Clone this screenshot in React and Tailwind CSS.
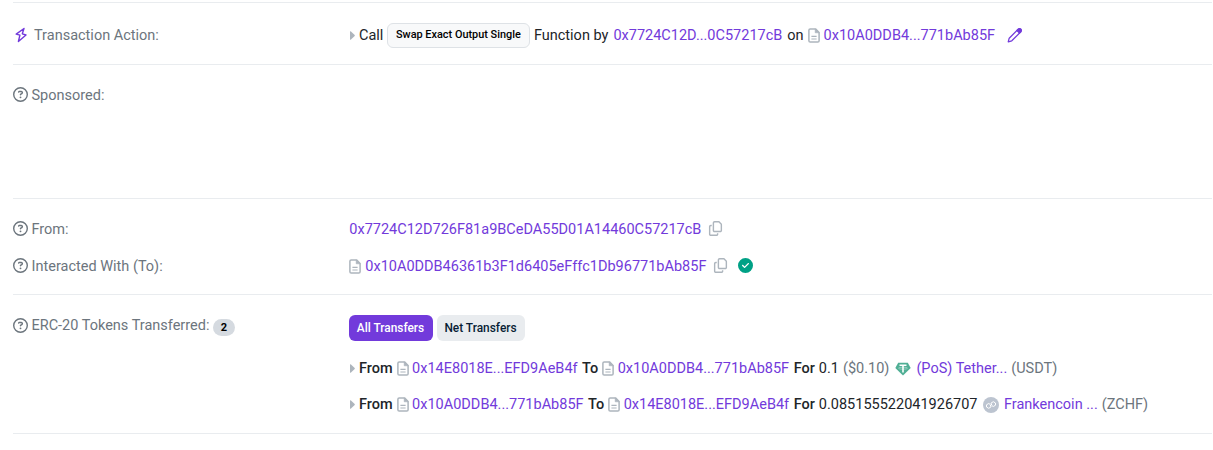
import React from "react";
import { FaRegCopy, FaRegCircleQuestion, FaCircleCheck } from "react-icons/fa6";

const Section = ({ className, children }) => (
  <section className={`border-b border-[#e9ecef] ${className}`}>{children}</section>
);

const Row = ({ className = "h-[37px]", label, children }) => (
  <div className={`flex items-center ${className}`}>
    <div className="flex w-[336px] shrink-0 items-center text-[#6c757d]">{label}</div>
    <div className="flex items-center">{children}</div>
  </div>
);

const HelpLabel = ({ children }) => (
  <>
    <FaRegCircleQuestion className="mb-[2px] mr-[3.5px] h-[15px] w-[15px]" />
    <span>{children}</span>
  </>
);

const Doc = ({ className = "" }) => (
  <svg viewBox="0 0 12 15" className={`mb-px h-[15px] w-3 shrink-0 text-[#adb5bd] ${className}`} fill="none" stroke="currentColor" strokeWidth="1.5" strokeLinejoin="round">
    <path d="M2.2.9H7.5L11.1 4.5V12.8Q11.1 14.1 9.8 14.1H2.2Q.9 14.1.9 12.8V2.2Q.9.9 2.2.9Z" />
    <path d="M7.2.9V4.8H11.1Z" fill="currentColor" strokeWidth=".6" />
    <path d="M3.4 8.3H8.6M3.4 11H8.6" strokeWidth="1.2" />
  </svg>
);

const Caret = () => (
  <svg viewBox="0 0 5 9" className="mb-px ml-px mr-1 h-[9px] w-[5px] text-[#adb5bd]">
    <path d="M0 .5 Q.5 0 1 .4 L4.7 4 Q5 4.5 4.7 5 L1 8.6 Q.5 9 0 8.5Z" fill="currentColor" />
  </svg>
);

const Addr = ({ children, className = "" }) => (
  <a className={`text-[#723adb] ${className}`}>{children}</a>
);

const Bolt = () => (
  <svg viewBox="0 0 12 16" className="mb-px ml-[2px] mr-[7px] h-4 w-3 text-[#723adb]" fill="none" stroke="currentColor" strokeWidth="1.4" strokeLinejoin="round">
    <path d="M9 1.5 L1.2 7.1 L4.9 8.2 L3.4 14.5 L11 8 L7.3 6.8Z" />
  </svg>
);

const Pencil = () => (
  <svg viewBox="0 0 16 16" className="mb-px ml-3 h-4 w-4 text-[#723adb]" fill="none" stroke="currentColor" strokeWidth="1.25" strokeLinejoin="round">
    <path d="M1.2 14.8 L2.2 11.2 L11.2 2.2 Q12.5 1.1 13.8 2.2 Q14.9 3.5 13.8 4.8 L4.8 13.8Z" />
    <path d="M9.9 3.5 L12.5 6.1 L13.8 4.8 Q14.9 3.5 13.8 2.2 Q12.5 1.1 11.2 2.2Z" fill="currentColor" />
  </svg>
);

const Tether = () => (
  <svg viewBox="0 0 16 14" className="h-3.5 w-4">
    <path d="M3.2.7h9.6L15.7 6 8 13.4.3 6Z" fill="#50af95" />
    <path d="M4.5 3.2h7M8 3.2v7.3" stroke="#fff" strokeWidth="1.6" />
    <ellipse cx="8" cy="6.2" rx="4.4" ry="1" fill="none" stroke="#fff" strokeWidth=".4" />
  </svg>
);

const Token = () => (
  <svg viewBox="0 0 16 16" className="h-4 w-4">
    <circle cx="8" cy="8" r="8" fill="#bcc4d0" />
    <g fill="none" stroke="#fff" strokeWidth="1" strokeLinejoin="round">
      <path d="M7.9 8.1V10L5.7 11.3 3.5 10V7.8L5.7 6.5 7 7.3" />
      <path d="M8.1 7.9V6L10.3 4.7 12.5 6V8.2L10.3 9.5 9 8.7" />
      <path d="M7 9 9 7" />
    </g>
  </svg>
);

const Transfer = ({ from, to, children }) => (
  <div className="flex h-9 items-center">
    <Caret />
    <span className="font-medium">From</span>
    <Doc className="ml-[4px] mr-[3.5px]" />
    <Addr>{from}</Addr>
    <span className="ml-[4.5px] font-medium">To</span>
    <Doc className="ml-[4px] mr-[3.5px]" />
    <Addr>{to}</Addr>
    <span className="ml-[4.5px] mr-1 font-medium">For</span>
    {children}
  </div>
);

export default function App() {
  return (
    <main className="h-[450px] w-[1213px] overflow-hidden whitespace-nowrap bg-white pl-[13px] pr-px pt-[2px] font-[Roboto,sans-serif] text-[14.5px] leading-[22px] text-[#212529]">
      <div className="border-t border-[#e9ecef]">
        <Section className="h-[62px] pt-[14px]">
          <Row className="h-[37px]" label={<><Bolt /><span>Transaction Action:</span></>}>
            <Caret />
            <span>Call</span>
            <span className="mb-px ml-[3.5px] mr-1 flex h-[25px] w-[143px] items-center justify-center rounded-md border border-[#dee2e6] bg-[#f8f9fa] pb-px text-[10.9px] font-medium text-black">
              Swap Exact Output Single
            </span>
            <span>Function by</span>
            <Addr className="ml-[5px]">0x7724C12D...0C57217cB</Addr>
            <span className="ml-[5px]">on</span>
            <Doc className="ml-[4px] mr-[4px]" />
            <Addr>0x10A0DDB4...771bAb85F</Addr>
            <Pencil />
          </Row>
        </Section>
        <Section className="h-[134px] pt-3">
          <Row label={<HelpLabel>Sponsored:</HelpLabel>} />
        </Section>
        <Section className="h-[96px] pt-3">
          <Row label={<HelpLabel>From:</HelpLabel>}>
            <Addr className="ml-[0.3px]">0x7724C12D726F81a9BCeDA55D01A14460C57217cB</Addr>
            <FaRegCopy className="mb-[2px] ml-[6.5px] h-[15px] w-[15px] text-[#adb5bd]" />
          </Row>
          <Row label={<HelpLabel>Interacted With (To):</HelpLabel>}>
            <Doc className="mr-[4.3px]" />
            <Addr>0x10A0DDB46361b3F1d6405eFffc1Db96771bAb85F</Addr>
            <FaRegCopy className="mb-[2px] ml-[7px] h-[15px] w-[15px] text-[#adb5bd]" />
            <FaCircleCheck className="mb-[2px] ml-[9.5px] h-[15px] w-[15px] text-[#00a186]" />
          </Row>
        </Section>
        <Section className="flex h-[139px] pt-5">
          <div className="flex h-[22px] w-[336px] shrink-0 items-center text-[#6c757d]">
            <HelpLabel>ERC-20 Tokens Transferred:</HelpLabel>
            <span className="ml-[3.5px] mt-[3px] flex h-[17px] w-[22px] items-center justify-center rounded-full bg-[#d5dae0] text-[11px] font-bold text-black">2</span>
          </div>
          <div>
            <div className="mb-[10px] flex gap-1 text-[11.9px] font-medium">
              <button className="h-[26px] w-[84px] rounded-md bg-[#723adb] pr-px text-white">All Transfers</button>
              <button className="h-[26px] w-[88px] rounded-md bg-[#e9ecef] pr-px text-[#081d35]">Net Transfers</button>
            </div>
            <Transfer from="0x14E8018E...EFD9AeB4f" to="0x10A0DDB4...771bAb85F">
              <span>0.1</span>
              <span className="ml-1 mr-[5.5px] text-[#6c757d]">($0.10)</span>
              <Tether />
              <Addr className="ml-[5.5px] mr-1">(PoS) Tether...</Addr>
              <span className="text-[#6c757d]">(USDT)</span>
            </Transfer>
            <Transfer from="0x10A0DDB4...771bAb85F" to="0x14E8018E...EFD9AeB4f">
              <span className="mr-[5px]">0.085155522041926707</span>
              <Token />
              <Addr className="ml-[5.5px] mr-1">Frankencoin ...</Addr>
              <span className="text-[#6c757d]">(ZCHF)</span>
            </Transfer>
          </div>
        </Section>
      </div>
    </main>
  );
}
